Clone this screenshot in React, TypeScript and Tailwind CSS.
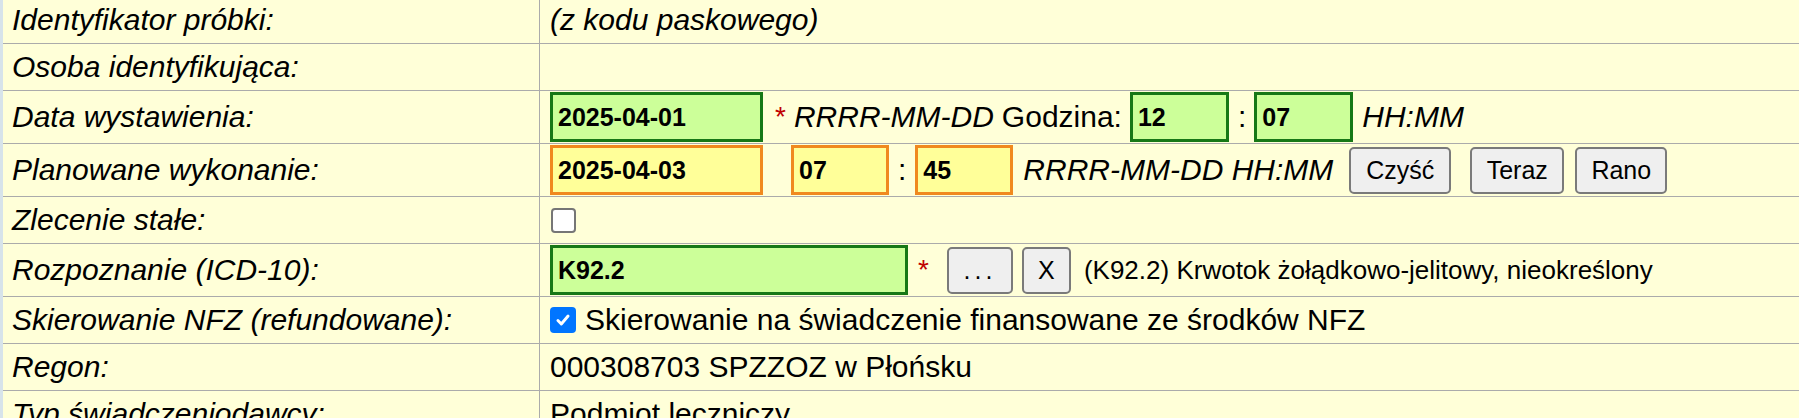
import type { ReactNode } from 'react';

// --- Small building blocks ---
function Row({ label, children }: { label: string; children?: ReactNode }) {
  return (
    <div className="grid grid-cols-[537px_1fr] border-b border-[#ababab]">
      <div className="flex items-center border-r border-[#ababab] py-[6px] pl-[9px] italic leading-[34px]">{label}</div>
      <div className="flex items-center py-[1px] pl-[10px] leading-[34px]">{children}</div>
    </div>
  );
}

function Field({ value, tone, className = '' }: { value: string; tone: 'green' | 'orange'; className?: string }) {
  const look =
    tone === 'green'
      ? 'border-[#167816] bg-[#ccff99]'
      : 'border-[#f0891e] bg-[#ffff99]';
  return (
    <input
      readOnly
      value={value}
      className={`h-[50px] border-[3px] px-[5px] text-[25px] font-bold text-black outline-none ${look} ${className}`}
    />
  );
}

function Btn({ children, className = '' }: { children: ReactNode; className?: string }) {
  return (
    <button className={`flex h-[47px] items-center justify-center rounded-[5px] border-2 border-[#7a7a7a] bg-[#efefef] text-[25px] text-black ${className}`}>
      {children}
    </button>
  );
}

function Star({ className = '' }: { className?: string }) {
  return <span className={`text-[28px] text-[#c00000] ${className}`}>*</span>;
}

// --- Main Component ---
export default function App() {
  return (
    <div className="h-[418px] overflow-hidden bg-[#ffffd8] font-['Liberation_Sans',Arial,sans-serif] text-[30px] text-black">
      <div className="-mt-[3px] border-l-[3px] border-[#d7e3ea]">
        <Row label="Identyfikator próbki:">
          <span className="italic">(z kodu paskowego)</span>
        </Row>

        <Row label="Osoba identyfikująca:" />

        <Row label="Data wystawienia:">
          <Field value="2025-04-01" tone="green" className="w-[213px]" />
          <Star className="ml-[12px]" />
          <span className="ml-[8px] italic">RRRR-MM-DD</span>
          <span className="ml-[8px]">Godzina:</span>
          <Field value="12" tone="green" className="ml-[8px] w-[99px]" />
          <span className="ml-[9px]">:</span>
          <Field value="07" tone="green" className="ml-[8px] w-[99px]" />
          <span className="ml-[9px] italic">HH:MM</span>
        </Row>

        <Row label="Planowane wykonanie:">
          <Field value="2025-04-03" tone="orange" className="w-[213px]" />
          <Field value="07" tone="orange" className="ml-[28px] w-[98px]" />
          <span className="ml-[9px]">:</span>
          <Field value="45" tone="orange" className="ml-[9px] w-[98px]" />
          <span className="ml-[10px] italic">RRRR-MM-DD HH:MM</span>
          <Btn className="ml-[16px] w-[102px]">Czyść</Btn>
          <Btn className="ml-[19px] w-[94px]">Teraz</Btn>
          <Btn className="ml-[11px] w-[92px]">Rano</Btn>
        </Row>

        <Row label="Zlecenie stałe:">
          <span className="ml-[1px] h-[25px] w-[25px] rounded-[4px] border-2 border-[#767676] bg-white" />
        </Row>

        <Row label="Rozpoznanie (ICD-10):">
          <Field value="K92.2" tone="green" className="w-[358px]" />
          <Star className="ml-[10px]" />
          <Btn className="ml-[18px] w-[66px] tracking-[4px]">...</Btn>
          <Btn className="ml-[9px] w-[49px]">X</Btn>
          <span className="ml-[13px] text-[26px]">(K92.2) Krwotok żołądkowo-jelitowy, nieokreślony</span>
        </Row>

        <Row label="Skierowanie NFZ (refundowane):">
          <span className="flex h-[26px] w-[26px] items-center justify-center rounded-[4px] bg-[#0075ff]">
            <svg viewBox="0 0 16 16" className="h-[18px] w-[18px]" fill="none" stroke="white" strokeWidth="2.6" strokeLinecap="round" strokeLinejoin="round">
              <path d="M3.5 8.5l3 3 6-7" />
            </svg>
          </span>
          <span className="ml-[9px]">Skierowanie na świadczenie finansowane ze środków NFZ</span>
        </Row>

        <Row label="Regon:">
          <span>000308703 SPZZOZ w Płońsku</span>
        </Row>

        <Row label="Typ świadczeniodawcy:">
          <span>Podmiot leczniczy</span>
        </Row>
      </div>
    </div>
  );
}
